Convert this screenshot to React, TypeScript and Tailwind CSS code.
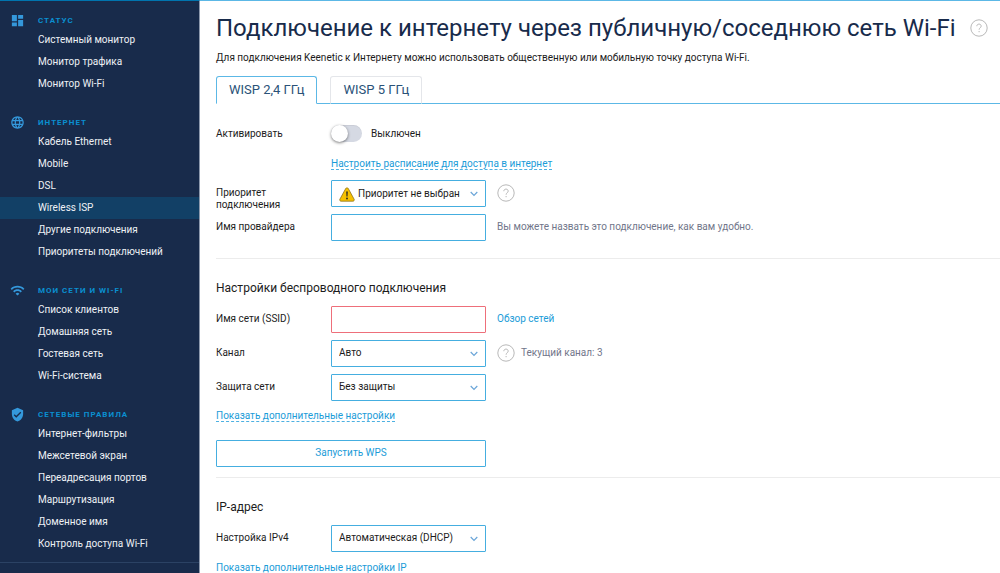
import { useState } from 'react'
import type { ReactNode } from 'react'
import type { IconType } from 'react-icons'
import { MdDashboard, MdLanguage, MdVerifiedUser, MdWifi } from 'react-icons/md'

type Section = { title: string; icon: IconType; items: string[] }

const sections: Section[] = [
  { title: 'Статус', icon: MdDashboard, items: ['Системный монитор', 'Монитор трафика', 'Монитор Wi-Fi'] },
  {
    title: 'Интернет',
    icon: MdLanguage,
    items: ['Кабель Ethernet', 'Mobile', 'DSL', 'Wireless ISP', 'Другие подключения', 'Приоритеты подключений'],
  },
  { title: 'Мои сети и Wi-Fi', icon: MdWifi, items: ['Список клиентов', 'Домашняя сеть', 'Гостевая сеть', 'Wi-Fi-система'] },
  {
    title: 'Сетевые правила',
    icon: MdVerifiedUser,
    items: ['Интернет-фильтры', 'Межсетевой экран', 'Переадресация портов', 'Маршрутизация', 'Доменное имя', 'Контроль доступа Wi-Fi'],
  },
]

const linkClass = 'text-[#1b9cd8]'
const dashedClass = 'border-b border-dashed border-[#4db1e2] leading-3 text-[#1b9cd8]'
const fieldClass = 'block h-[27px] w-full rounded-[1px] border border-[#45aee0] bg-white px-[7px] outline-none'
const errorFieldClass = 'block h-[27px] w-full rounded-[1px] border border-[#ee6f7a] bg-white px-[7px] outline-none'

function Sidebar() {
  return (
    <aside className="w-[200px] shrink-0 border-t border-r border-t-[#0074ae] border-r-[#8d99ad] bg-[#182b4b]">
      <nav className="flex flex-col gap-[19px] border-b border-[#2b4264] pt-[11px] pb-[7px]">
        {sections.map(({ title, icon: Icon, items }) => (
          <section key={title}>
            <h2 className="flex h-[17px] items-center text-[8px] font-bold tracking-[1px] text-[#0a8fd0] uppercase">
              <span className="flex w-[38px] pl-[10px]">
                <Icon size={15} className="text-[#3498db]" />
              </span>
              {title}
            </h2>
            <ul>
              {items.map(item => (
                <li key={item}>
                  <a
                    href="#"
                    className={`block h-[22px] pl-[38px] leading-[22px] whitespace-nowrap text-[#eef1f5] ${
                      item === 'Wireless ISP' ? 'bg-[#124066]' : 'hover:bg-[#1d3558]'
                    }`}
                  >
                    {item}
                  </a>
                </li>
              ))}
            </ul>
          </section>
        ))}
      </nav>
    </aside>
  )
}

function Help() {
  return (
    <button type="button" aria-label="Справка" className="shrink-0 text-[#b8b8b8]">
      <svg width="18" height="18" viewBox="0 0 18 18" fill="none" stroke="currentColor">
        <circle cx="9" cy="9" r="8.2" />
        <path d="M6.8 7.2c0-1.3 1-2.1 2.2-2.1s2.2.8 2.2 2c0 1.6-2.1 1.8-2.1 3.6M9.1 12v1.2" />
      </svg>
    </button>
  )
}

function Warning() {
  return (
    <svg width="16" height="15" viewBox="0 0 16 15" className="pointer-events-none absolute top-[7px] left-[8px]">
      <path d="M8 .8c.6 0 1 .3 1.3.8l5.8 10.6c.5 1-.1 2-1.2 2H2.1c-1.1 0-1.7-1-1.2-2L6.7 1.6C7 1.1 7.4.8 8 .8z" fill="#f6c100" stroke="#8d7420" strokeWidth=".8" />
      <path d="M7.2 4.5h1.6L8.5 9.5h-1z" fill="#222" />
      <circle cx="8" cy="11.5" r=".9" fill="#222" />
    </svg>
  )
}

function Row({ id, label, side, children }: { id: string; label: string; side?: ReactNode; children: ReactNode }) {
  return (
    <div className="flex h-[27px] items-start">
      <label htmlFor={id} className="w-[115px] shrink-0 pt-[7px] pr-6 leading-3">
        {label}
      </label>
      <div className="relative w-[155px] shrink-0">{children}</div>
      {side && <div className="ml-[11px] flex h-[25px] items-center gap-[6px] text-[#71768a]">{side}</div>}
    </div>
  )
}

function Select({ id, value, warning }: { id: string; value: string; warning?: boolean }) {
  return (
    <>
      <select id={id} className={`${fieldClass} appearance-none ${warning ? 'pl-[26px]' : 'pb-[2px]'}`}>
        <option>{value}</option>
      </select>
      {warning && <Warning />}
      <svg width="8" height="6" viewBox="0 0 8 6" className="pointer-events-none absolute top-[11px] right-[8px]" fill="none" stroke="#6aa5d8">
        <path d="M.7 1L4 4.3 7.3 1" strokeWidth="1.2" />
      </svg>
    </>
  )
}

export default function App() {
  const [enabled, setEnabled] = useState(false)
  const [tab, setTab] = useState(0)

  return (
    <div className="flex min-h-screen bg-white font-['Roboto',sans-serif] text-[10px] text-[#1c1c1c]">
      <Sidebar />
      <main className="min-w-0 flex-1 border-t border-[#5cb8e6] pl-4">
        <header className="pt-[11px]">
          <div className="flex h-8 items-center gap-[14px]">
            <h1 className="text-[24px] leading-8 whitespace-nowrap text-[#182b4b]">
              Подключение к интернету через публичную/соседнюю сеть Wi-Fi
            </h1>
            <Help />
          </div>
          <p className="mt-[6px] leading-4">
            Для подключения Keenetic к Интернету можно использовать общественную или мобильную точку доступа Wi-Fi.
          </p>
        </header>

        <div role="tablist" className="mt-[10px] flex h-[28px] text-[13px] text-[#2a5278]">
          {['WISP 2,4 ГГц', 'WISP 5 ГГц'].map((name, i) => (
            <div key={name} className="flex">
              <button
                type="button"
                role="tab"
                aria-selected={tab === i}
                onClick={() => setTab(i)}
                className={`rounded-t-[3px] border px-3 ${
                  tab === i ? 'border-[#5cb8e6] border-b-transparent' : 'border-[#e4e6ea] border-b-[#5cb8e6]'
                }`}
              >
                {name}
              </button>
              {i === 0 && <span className="w-[13px] border-b border-[#5cb8e6]" />}
            </div>
          ))}
          <span className="flex-1 border-b border-[#5cb8e6]" />
        </div>

        <form>
          <section className="border-b border-[#ececec] pt-[16px] pb-[17px]">
            <div className="flex h-[27px] items-center">
              <label htmlFor="enabled" className="w-[115px]">Активировать</label>
              <span className="relative flex">
                <input
                  id="enabled"
                  type="checkbox"
                  role="switch"
                  checked={enabled}
                  onChange={e => setEnabled(e.target.checked)}
                  className="peer h-[17px] w-[31px] appearance-none rounded-full bg-[#d5d9e3] inset-shadow-2xs checked:bg-[#4db1e2]"
                />
                <span className="pointer-events-none absolute top-0 left-0 size-[17px] rounded-full bg-white shadow-[0_1px_3px_rgba(0,0,0,0.5)] peer-checked:left-[14px]" />
              </span>
              <span className="ml-[9px]">{enabled ? 'Включен' : 'Выключен'}</span>
            </div>
            <div className="mt-[11px] mb-[10px] flex h-[12px] pl-[115px]">
              <a href="#" className={dashedClass}>Настроить расписание для доступа в интернет</a>
            </div>
            <div className="flex flex-col gap-[7px]">
              <Row id="priority" label="Приоритет подключения" side={<Help />}>
                <Select id="priority" value="Приоритет не выбран" warning />
              </Row>
              <Row id="provider" label="Имя провайдера" side="Вы можете назвать это подключение, как вам удобно.">
                <input id="provider" type="text" className={fieldClass} />
              </Row>
            </div>
          </section>

          <section className="border-b border-[#ececec] pt-[19px] pb-[10px]">
            <h2 className="text-[12px] leading-5">Настройки беспроводного подключения</h2>
            <div className="mt-[8px] flex flex-col gap-[7px]">
              <Row id="ssid" label="Имя сети (SSID)" side={<a href="#" className={linkClass}>Обзор сетей</a>}>
                <input id="ssid" type="text" className={errorFieldClass} />
              </Row>
              <Row id="channel" label="Канал" side={<><Help />Текущий канал: 3</>}>
                <Select id="channel" value="Авто" />
              </Row>
              <Row id="security" label="Защита сети">
                <Select id="security" value="Без защиты" />
              </Row>
            </div>
            <div className="mt-[9px] flex h-[12px]">
              <a href="#" className={dashedClass}>Показать дополнительные настройки</a>
            </div>
            <button type="button" className={`mt-[18px] block h-[27px] w-[270px] rounded-[1px] border border-[#45aee0] pb-[2px] ${linkClass}`}>
              Запустить WPS
            </button>
          </section>

          <section className="pt-[19px]">
            <h2 className="text-[12px] leading-5">IP-адрес</h2>
            <div className="mt-[8px]">
              <Row id="ipv4" label="Настройка IPv4">
                <Select id="ipv4" value="Автоматическая (DHCP)" />
              </Row>
            </div>
            <a href="#" className={`mt-[8px] block leading-4 ${linkClass}`}>Показать дополнительные настройки IP</a>
          </section>
        </form>
      </main>
    </div>
  )
}
